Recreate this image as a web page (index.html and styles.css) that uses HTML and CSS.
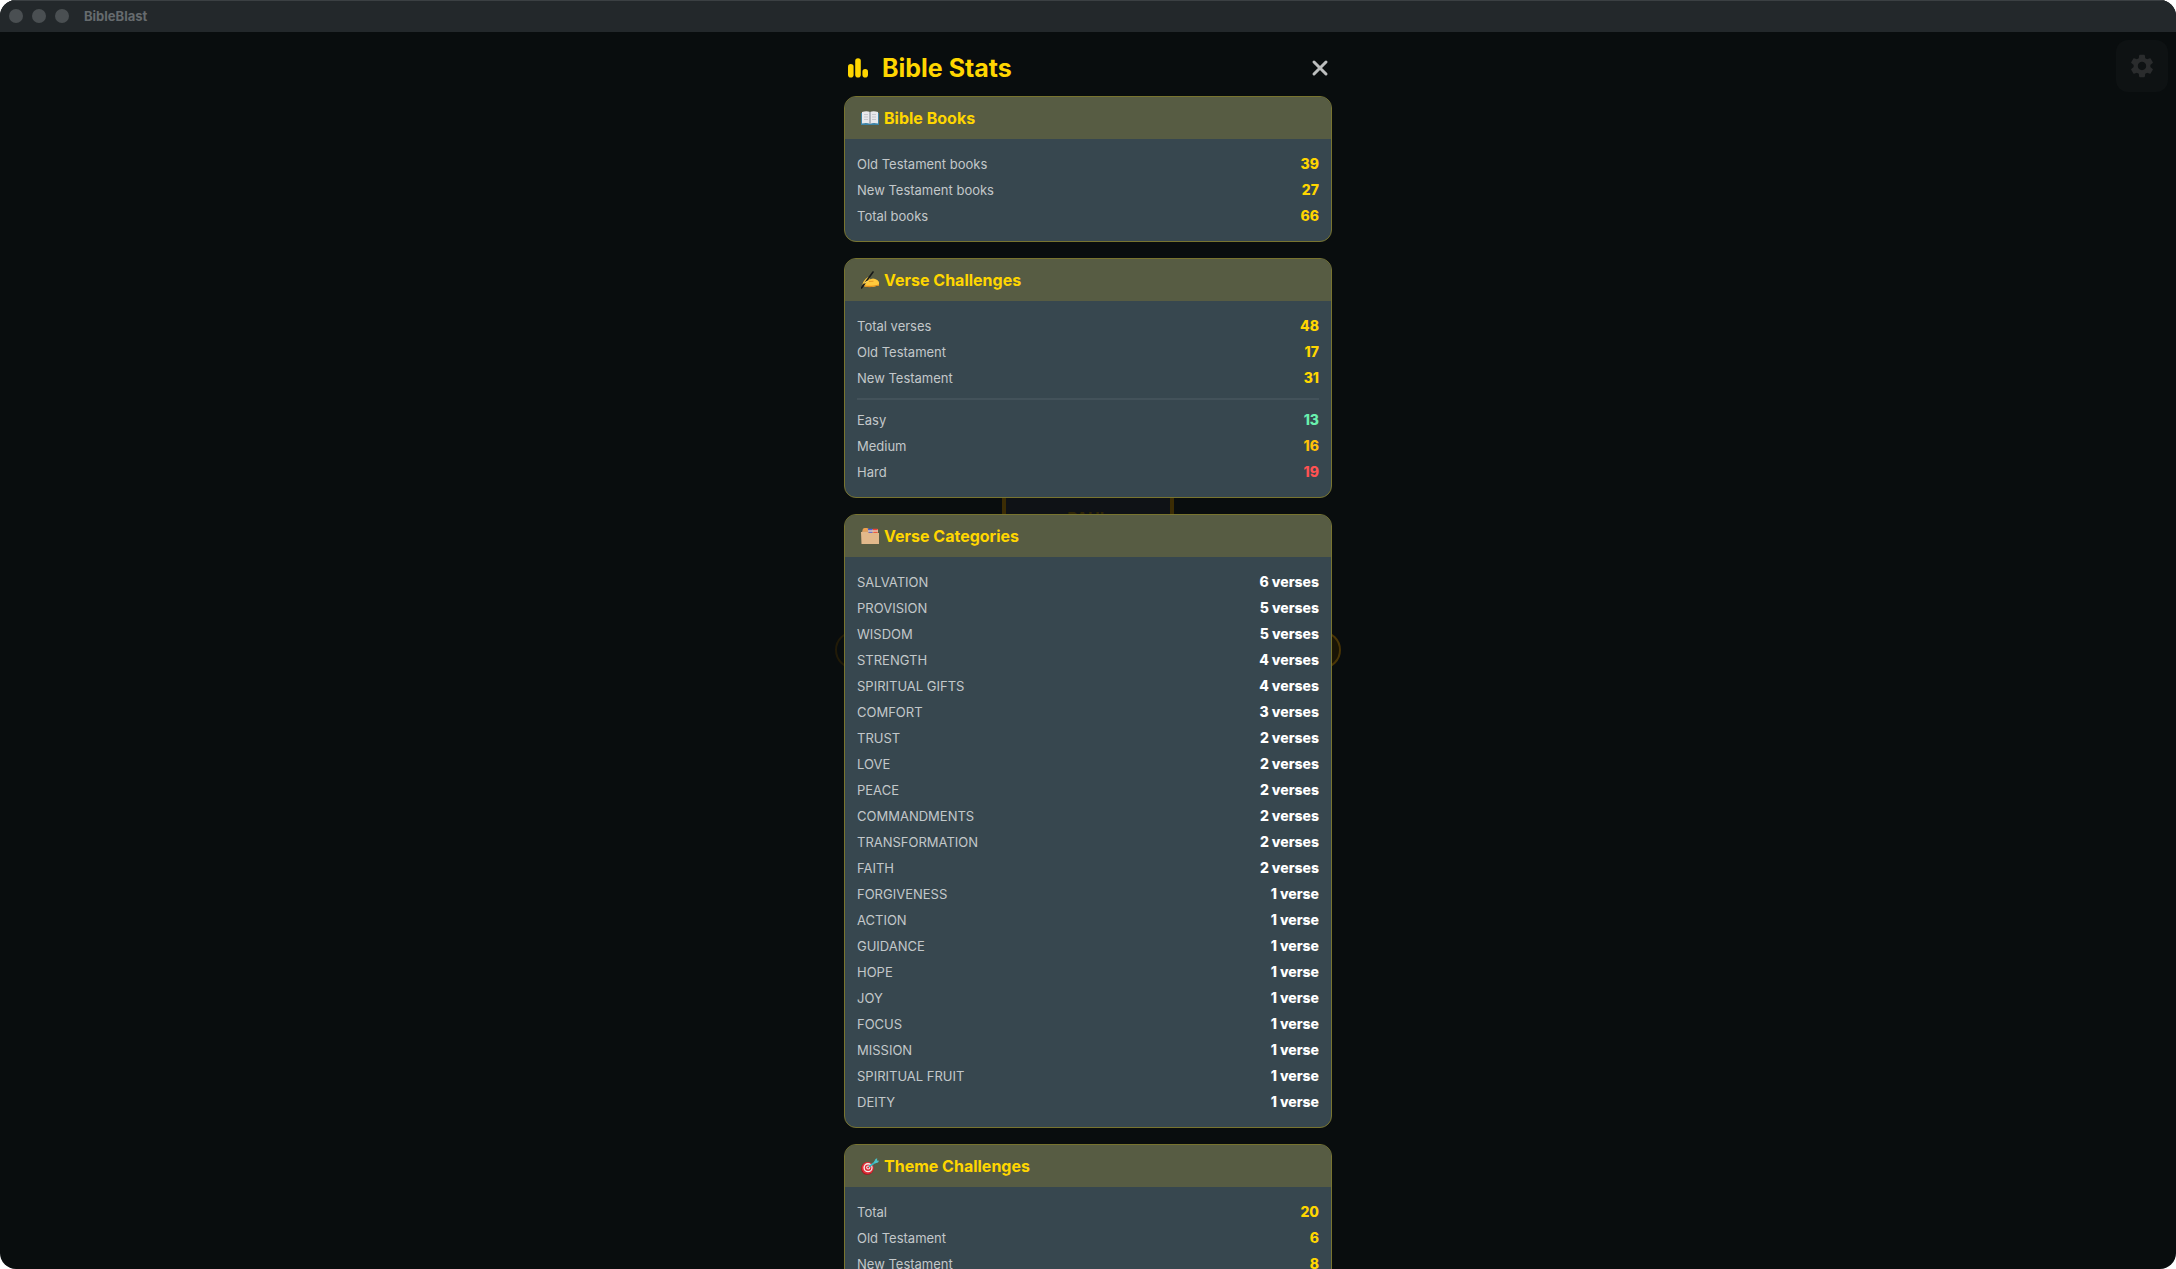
FILE: index.html
```
<!DOCTYPE html>
<html lang="en">
<head>
  <meta charset="UTF-8">
  <title>BibleBlast</title>
  <link rel="stylesheet" href="styles.css">
</head>
<body>

  <div class="window">

    <header class="titlebar">
      <span class="dot"></span>
      <span class="dot"></span>
      <span class="dot"></span>
      <span class="app-name">BibleBlast</span>
    </header>

    <main class="stage">

      <!-- dimmed game screen behind the stats -->
      <div class="game">
        <span class="knob left"></span>
        <span class="tile">PAUL</span>
        <span class="knob right"></span>
      </div>

      <button class="settings" aria-label="Settings">
        <svg viewBox="0 0 24 24" width="28" height="28"><path d="M19.14 12.94c.04-.3.06-.61.06-.94 0-.32-.02-.64-.07-.94l2.03-1.58c.18-.14.23-.41.12-.61l-1.92-3.32c-.12-.22-.37-.29-.59-.22l-2.39.96c-.5-.38-1.03-.7-1.62-.94l-.36-2.54c-.04-.24-.24-.41-.48-.41h-3.84c-.24 0-.43.17-.47.41l-.36 2.54c-.59.24-1.13.57-1.62.94l-2.39-.96c-.22-.08-.47 0-.59.22L2.74 8.87c-.12.21-.08.47.12.61l2.03 1.58c-.05.3-.09.63-.09.94s.02.64.07.94l-2.03 1.58c-.18.14-.23.41-.12.61l1.92 3.32c.12.22.37.29.59.22l2.39-.96c.5.38 1.03.7 1.62.94l.36 2.54c.05.24.24.41.48.41h3.84c.24 0 .44-.17.47-.41l.36-2.54c.59-.24 1.13-.56 1.62-.94l2.39.96c.22.08.47 0 .59-.22l1.92-3.32c.12-.22.07-.47-.12-.61l-2.01-1.58zM12 15.6c-1.98 0-3.6-1.62-3.6-3.6s1.62-3.6 3.6-3.6 3.6 1.62 3.6 3.6-1.62 3.6-3.6 3.6z"/></svg>
      </button>

      <div class="panel">

        <div class="panel-head">
          <svg viewBox="0 0 28 28" width="28" height="28" fill="#ffd600">
            <rect x="4" y="10" width="5.6" height="13.6" rx="2.8"/>
            <rect x="11.2" y="4.2" width="5.6" height="19.4" rx="2.8"/>
            <rect x="18.4" y="15" width="5.6" height="8.6" rx="2.8"/>
          </svg>
          <h1>Bible Stats</h1>
          <button class="close" aria-label="Close">
            <svg viewBox="0 0 24 24" width="24" height="24"><path d="M6 6l12 12M18 6L6 18"/></svg>
          </button>
        </div>

        <section class="card">
          <h2>
            <svg viewBox="0 0 18 18" width="18" height="18">
              <path d="M0 4h18v12H0z" fill="#3b83a6"/>
              <path d="M1 3c3-1 6-1 8 0 2-1 5-1 8 0v11.500c-3-.8-6-.8-8 .5-2-1.300-5-1.300-8-.5z" fill="#e9e9ec"/>
              <path d="M9 3v12" stroke="#77808a" stroke-width="1"/>
              <path d="M3 5.500h4M3 8h4M3 10.500h4M11 5.500h4M11 8h4M11 10.500h4" stroke="#b9bcc2" stroke-width=".7"/>
            </svg>
            Bible Books
          </h2>
          <dl>
            <div><dt>Old Testament books</dt><dd>39</dd></div>
            <div><dt>New Testament books</dt><dd>27</dd></div>
            <div><dt>Total books</dt><dd>66</dd></div>
          </dl>
        </section>

        <section class="card">
          <h2>
            <svg viewBox="0 0 18 18" width="18" height="18">
              <path d="M1.500 13c.5-2.500 2.500-5 5-6.500 1.200-.7 2.500-.4 2.300.6L8.300 8.500l3.700-.9c3 .3 6 2.400 6 3.800v3c-4 1-8 2-12 1.600-2-.2-4.300-1-4.500-3z" fill="#ffc93c"/>
              <path d="M3 14c4 1.500 10 .8 15-.6v1.200c-4 1-8 1.900-12 1.500-1.500-.2-2.700-.8-3-2.100z" fill="#dd8a1d"/>
              <path d="M8 10.500l4.500-.3" stroke="#dd8a1d" stroke-width=".8"/>
              <path d="M.5 17L12 1" stroke="#17191a" stroke-width="1.600" stroke-linecap="round"/>
              <path d="M3 11.500l3.500-2 .9 1-3.700 2.600z" fill="#ffd75e"/>
            </svg>
            Verse Challenges
          </h2>
          <dl>
            <div><dt>Total verses</dt><dd>48</dd></div>
            <div><dt>Old Testament</dt><dd>17</dd></div>
            <div><dt>New Testament</dt><dd>31</dd></div>
          </dl>
          <hr>
          <dl>
            <div><dt>Easy</dt><dd class="easy">13</dd></div>
            <div><dt>Medium</dt><dd class="medium">16</dd></div>
            <div><dt>Hard</dt><dd class="hard">19</dd></div>
          </dl>
        </section>

        <section class="card">
          <h2>
            <svg viewBox="0 0 18 18" width="18" height="18">
              <path d="M1 5l1-3.500L6 1l2 1h9v6H1z" fill="#d9a066"/>
              <path d="M2 3.500l1.500-2.500H6l1 2.500z" fill="#f0a04b"/>
              <path d="M7 1.800h4.500v1.700H7zM7.500 4.500h4v1.300h-4z" fill="#4a5be0"/>
              <path d="M12 1.800h4.500v1.700H12zM12.500 4.500h4v1.300h-4z" fill="#ee4438"/>
              <path d="M7 3.500h10v1H7z" fill="#e8e3df"/>
              <path d="M0 5h6.500l1 1H18v11H.5z" fill="#e2b98b"/>
            </svg>
            Verse Categories
          </h2>
          <dl class="counts">
            <div><dt>SALVATION</dt><dd>6 verses</dd></div>
            <div><dt>PROVISION</dt><dd>5 verses</dd></div>
            <div><dt>WISDOM</dt><dd>5 verses</dd></div>
            <div><dt>STRENGTH</dt><dd>4 verses</dd></div>
            <div><dt>SPIRITUAL GIFTS</dt><dd>4 verses</dd></div>
            <div><dt>COMFORT</dt><dd>3 verses</dd></div>
            <div><dt>TRUST</dt><dd>2 verses</dd></div>
            <div><dt>LOVE</dt><dd>2 verses</dd></div>
            <div><dt>PEACE</dt><dd>2 verses</dd></div>
            <div><dt>COMMANDMENTS</dt><dd>2 verses</dd></div>
            <div><dt>TRANSFORMATION</dt><dd>2 verses</dd></div>
            <div><dt>FAITH</dt><dd>2 verses</dd></div>
            <div><dt>FORGIVENESS</dt><dd>1 verse</dd></div>
            <div><dt>ACTION</dt><dd>1 verse</dd></div>
            <div><dt>GUIDANCE</dt><dd>1 verse</dd></div>
            <div><dt>HOPE</dt><dd>1 verse</dd></div>
            <div><dt>JOY</dt><dd>1 verse</dd></div>
            <div><dt>FOCUS</dt><dd>1 verse</dd></div>
            <div><dt>MISSION</dt><dd>1 verse</dd></div>
            <div><dt>SPIRITUAL FRUIT</dt><dd>1 verse</dd></div>
            <div><dt>DEITY</dt><dd>1 verse</dd></div>
          </dl>
        </section>

        <section class="card">
          <h2>
            <svg viewBox="0 0 18 18" width="18" height="18">
              <ellipse cx="6.300" cy="11.500" rx="6.200" ry="6.300" fill="#a3141c"/>
              <circle cx="6.700" cy="10.900" r="6" fill="#e0303a"/>
              <circle cx="7" cy="10.700" r="4.600" fill="#f4eeee"/>
              <circle cx="7.100" cy="10.700" r="3.300" fill="#dd2c37"/>
              <circle cx="7.200" cy="10.600" r="2" fill="#f4eeee"/>
              <circle cx="7.200" cy="10.600" r="1" fill="#dd2c37"/>
              <path d="M8 9.800L15 4.500" stroke="#35b5bd" stroke-width="1.700"/>
              <path d="M13 5l1.500-3 1.700-.7-.2 2.200 2 .3-1 1.700-3.200 1z" fill="#4cc3c9"/>
            </svg>
            Theme Challenges
          </h2>
          <dl>
            <div><dt>Total</dt><dd>20</dd></div>
            <div><dt>Old Testament</dt><dd>6</dd></div>
            <div><dt>New Testament</dt><dd>8</dd></div>
          </dl>
        </section>

      </div>
    </main>
  </div>

</body>
</html>
```
FILE: styles.css
```
* {
  box-sizing: border-box;
}
body {
  margin: 0;
  background: white;
  font-family: Inter, "Liberation Sans", sans-serif;
  font-size: 14px;
  color: white;
}
h1, h2, dl, dd {
  margin: 0;
}
button {
  padding: 0;
  border: none;
  background: none;
  cursor: pointer;
}
svg {
  display: block;
  flex: none;
}

.window {
  height: 100vh;
  display: flex;
  flex-direction: column;
  overflow: hidden;
  border-radius: 16px;
  background: #090d0e;
}
.titlebar {
  flex: none;
  display: flex;
  align-items: center;
  gap: 9px;
  height: 32px;
  padding: 0 9px 1px;
  background: #23282b;
  border-top: 1px solid #3b4043;
}
.dot {
  width: 14px;
  height: 14px;
  border-radius: 50%;
  background: #4a4f52;
}
.app-name {
  margin-left: 6px;
  font-size: 13px;
  font-weight: 700;
  color: #666b6e;
}

.stage {
  position: relative;
  flex: 1;
  min-height: 0;
  overflow: hidden;
}
.panel {
  position: relative;
  max-width: 488px;
  margin: 0 auto;
  display: flex;
  flex-direction: column;
  gap: 16px;
}
.panel-head {
  display: flex;
  align-items: center;
  gap: 10px;
  height: 72px;
  margin-bottom: -24px;
}
.panel-head h1 {
  flex: 1;
  font-size: 25px;
  font-weight: 700;
  color: #ffd600;
}
.close path {
  stroke: #bcbebe;
  stroke-width: 3;
  stroke-linecap: round;
}

.card {
  overflow: hidden;
  padding-bottom: 12px;
  border: 1px solid #78742f;
  border-radius: 12px;
  background: #37474f;
}
.card h2 {
  display: flex;
  align-items: center;
  gap: 5px;
  height: 42px;
  margin-bottom: 12px;
  padding: 0 16px;
  background: #575c43;
  font-size: 16px;
  font-weight: 700;
  color: #ffd600;
}
.card dl div {
  display: flex;
  align-items: center;
  justify-content: space-between;
  height: 26px;
  padding: 0 12px;
}
.card dt {
  font-size: 13px;
  color: #c3c8ca;
}
.card dd {
  line-height: 18px;
  font-weight: 800;
  color: #ffd600;
}
.card .counts dd {
  color: white;
}
.card .easy {
  color: #69f0ae;
}
.card .medium {
  color: #ffc107;
}
.card .hard {
  color: #ff5252;
}
.card hr {
  height: 2px;
  margin: 7px 12px;
  border: none;
  background: #43525a;
}

.settings {
  position: absolute;
  top: 8px;
  right: 8px;
  display: flex;
  align-items: center;
  justify-content: center;
  width: 52px;
  height: 52px;
  border-radius: 12px;
  background: #0e1213;
}
.settings path {
  fill: #2a2c2d;
}

.game {
  position: absolute;
  top: 440px;
  left: 50%;
  width: 506px;
  height: 200px;
  margin-left: -253px;
  display: flex;
  align-items: center;
  justify-content: space-between;
}
.tile {
  align-self: flex-start;
  width: 172px;
  height: 110px;
  padding-top: 32px;
  border: 4px solid #3b2c04;
  background: #0f1216;
  font-size: 16px;
  font-weight: 700;
  text-align: center;
  color: #2f2606;
}
.knob {
  width: 38px;
  height: 38px;
  margin-top: 156px;
  border: 2px solid #221b08;
  border-radius: 50%;
}
.knob.right {
  border-color: #4a3505;
  background: #191405;
}
```
